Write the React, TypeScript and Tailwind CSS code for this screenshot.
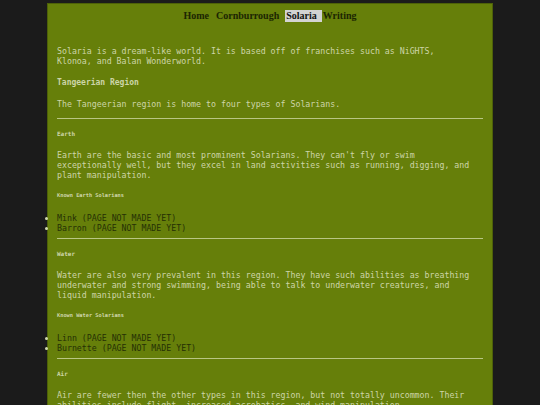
const mono = "font-['DejaVu_Sans_Mono','Liberation_Mono',monospace]";

type Section = {
  name: string;
  text: string;
  known?: string;
  members?: string[];
};

const sections: Section[] = [
  {
    name: "Earth",
    text: "Earth are the basic and most prominent Solarians. They can't fly or swim exceptionally well, but they excel in land activities such as running, digging, and plant manipulation.",
    known: "Known Earth Solarians",
    members: ["Mink (PAGE NOT MADE YET)", "Barron (PAGE NOT MADE YET)"],
  },
  {
    name: "Water",
    text: "Water are also very prevalent in this region. They have such abilities as breathing underwater and strong swimming, being able to talk to underwater creatures, and liquid manipulation.",
    known: "Known Water Solarians",
    members: ["Linn (PAGE NOT MADE YET)", "Burnette (PAGE NOT MADE YET)"],
  },
  {
    name: "Air",
    text: "Air are fewer then the other types in this region, but not totally uncommon. Their abilities include flight, increased acrobatics, and wind manipulation.",
    known: "Known Air Solarians",
    members: ["Zephy (PAGE NOT MADE YET)"],
  },
];

function Nav() {
  return (
    <nav className="pt-[6px] flex justify-center items-center text-[10px] leading-[12px] font-bold text-[#1b2502] font-['Liberation_Serif','Times_New_Roman',serif]">
      <span>Home</span>
      <span className="ml-[7px]">Cornburrough</span>
      <span className="ml-[6px] bg-[#d3d3d3] text-[#111] pl-[1px] pr-[5px]">Solaria</span>
      <span className="ml-[1px]">Writing</span>
    </nav>
  );
}

function SectionBlock({ s }: { s: Section }) {
  return (
    <div>
      <div className="h-px bg-[#b9c684]" />
      <h3 className="mt-[11px] text-[6px] leading-[8px] font-bold">{s.name}</h3>
      <p className="mt-[12px] max-w-[414px] text-[8.25px] leading-[10px]">{s.text}</p>
      {s.known && (
        <h4 className="mt-[12.5px] text-[5.3px] leading-[7px] font-bold">{s.known}</h4>
      )}
      {s.members && (
        <ul className="mt-[13.5px] list-disc pl-0 text-[8.25px] leading-[10px] marker:text-[#d3dbb0]">
          {s.members.map((m) => (
            <li key={m}>
              <span className="text-[#253005]">{m}</span>
            </li>
          ))}
        </ul>
      )}
      <div className="h-[5px]" />
    </div>
  );
}

export default function App() {
  return (
    <div className="h-[405px] bg-[#1b1b1b] pt-[3px] overflow-hidden">
      <div className={`mx-auto w-[446px] min-h-[420px] border border-[#4d6108] bg-[#667f0a] px-[9px] text-[#cdd5a8] ${mono}`}>
        <Nav />
        <p className="mt-[24px] max-w-[414px] text-[8.25px] leading-[10px]">
          Solaria is a dream-like world. It is based off of franchises such as NiGHTS, Klonoa, and Balan Wonderworld.
        </p>
        <h2 className="mt-[12px] text-[8px] leading-[10px] font-bold">Tangeerian Region</h2>
        <p className="mt-[11px] text-[8.25px] leading-[10px]">
          The Tangeerian region is home to four types of Solarians.
        </p>
        <div className="h-[8.5px]" />
        {sections.map((s) => (
          <SectionBlock key={s.name} s={s} />
        ))}
      </div>
    </div>
  );
}
